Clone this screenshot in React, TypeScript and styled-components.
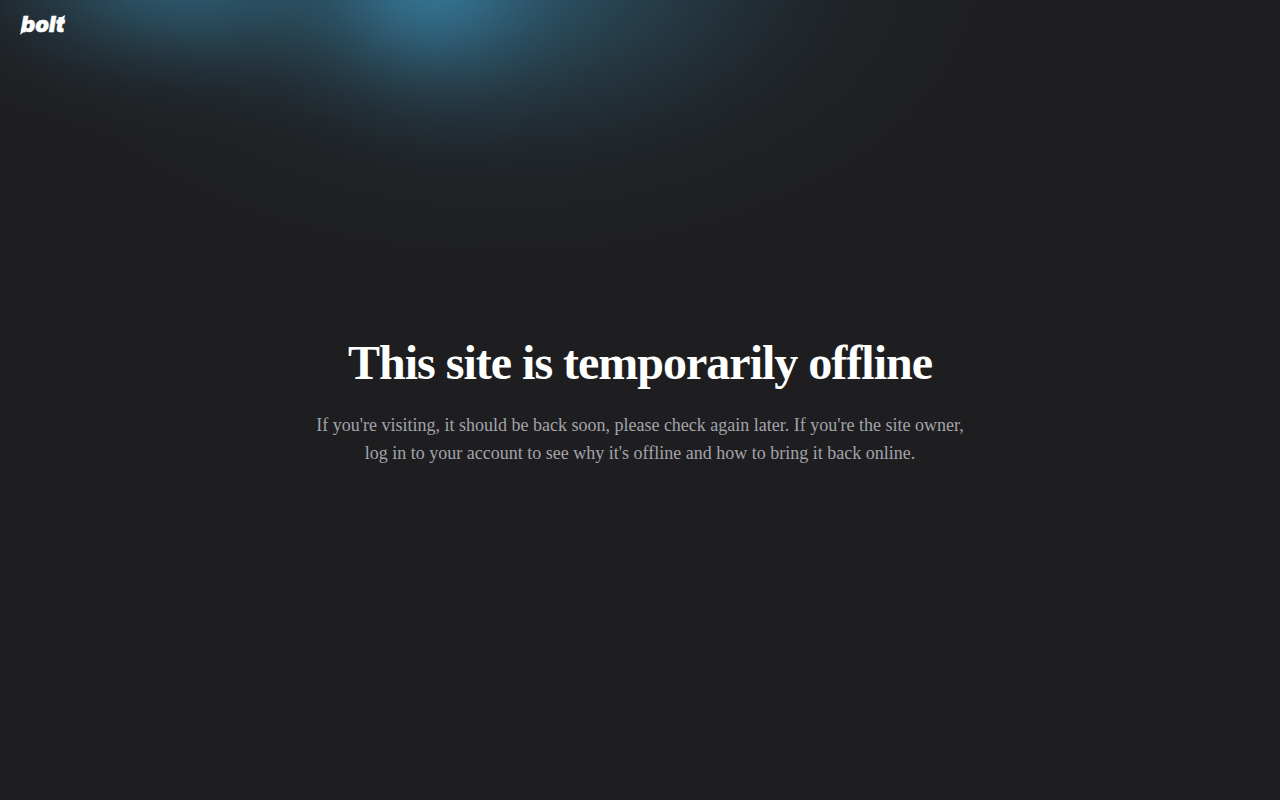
import React from 'react';
import styled, { createGlobalStyle } from 'styled-components';

const GlobalStyle = createGlobalStyle`
  *, *::before, *::after { box-sizing: border-box; }
  body {
    margin: 0;
    background: #1e1e20;
    color: #fff;
    font-family: 'Liberation Serif', 'Times New Roman', serif;
  }
`;

/* A soft elliptical light whose falloff follows a bell curve. */
const light = (x: number, y: number, spreadX: number, spreadY: number, strength: number) => {
  const steps = 16;
  const reach = 3;
  const stops = Array.from({ length: steps + 1 }, (_, i) => {
    const d = (i / steps) * reach;
    const alpha = i === steps ? 0 : strength * Math.exp((-d * d) / 2);
    return `rgba(64, 160, 205, ${alpha.toFixed(4)}) ${((i / steps) * 100).toFixed(2)}%`;
  });
  return `radial-gradient(${spreadX * reach}px ${spreadY * reach}px at ${x}px ${y}px, ${stops.join(', ')})`;
};

const Page = styled.div`
  min-height: 100vh;
  display: grid;
  grid-template-rows: 50px 1fr 44px;
  background-color: #1e1e20;
  background-image: ${[
    light(175, -20, 105, 54, 0.4),
    light(430, -20, 64, 60, 0.46),
    light(500, -30, 170, 100, 0.37),
  ].join(', ')};
`;

const Header = styled.header`
  display: flex;
  align-items: center;
  padding: 0 20px;
`;

const HomeLink = styled.a`
  display: flex;
  color: #fff;
`;

const Wordmark = styled.svg`
  display: block;
  overflow: visible;
  fill: currentColor;
  stroke: currentColor;
  font: italic 900 22px Inter, 'Open Sans', sans-serif;
`;

const Main = styled.main`
  display: flex;
  flex-direction: column;
  align-items: center;
  justify-content: center;
  padding: 0 24px;
  text-align: center;
`;

const Title = styled.h1`
  margin: 0 0 24px;
  font-size: 48px;
  line-height: 48px;
  font-weight: 700;
  letter-spacing: -1px;
`;

const Message = styled.p`
  max-width: 672px;
  margin: 0;
  color: #a3a3ab;
  font-size: 18px;
  line-height: 28px;
`;

export default function App() {
  return (
    <>
      <GlobalStyle />
      <Page>
        <Header>
          <HomeLink href="#" aria-label="bolt">
            <Wordmark width="46" height="20" viewBox="0 0 46 20" strokeWidth="0.5">
              <text x="1" y="17">bolt</text>
              <path d="M2 12 L0 20 L5 16 Z" stroke="none" />
              <path d="M45 0 L40 3 L40 6 L44 6 Z" stroke="none" />
            </Wordmark>
          </HomeLink>
        </Header>
        <Main>
          <Title>This site is temporarily offline</Title>
          <Message>
            If you're visiting, it should be back soon, please check again later. If you're the site
            owner, log in to your account to see why it's offline and how to bring it back online.
          </Message>
        </Main>
      </Page>
    </>
  );
}
